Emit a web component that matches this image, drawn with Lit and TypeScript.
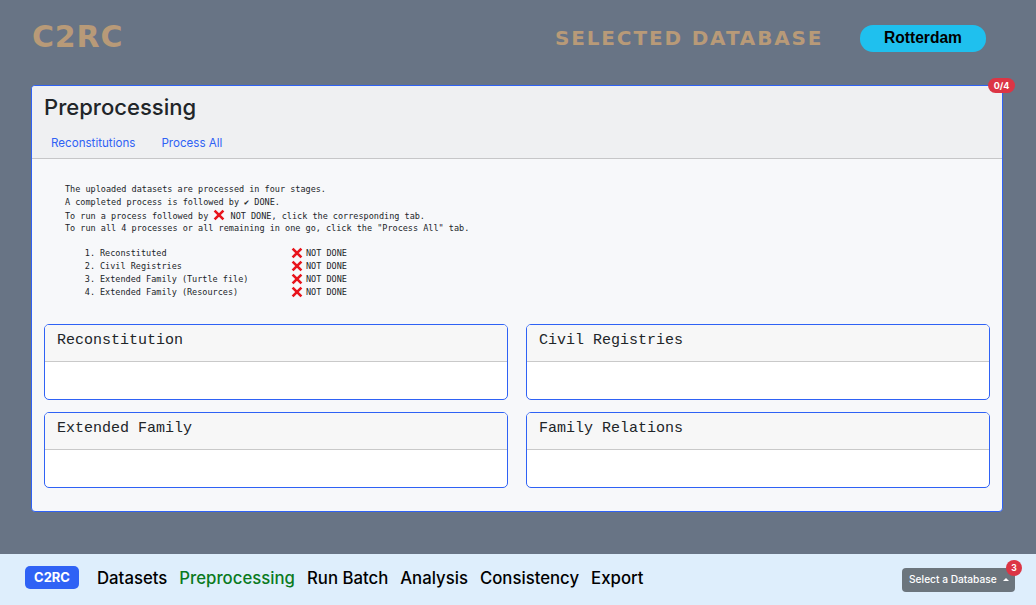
import { LitElement, html, css, svg } from "lit";
import { customElement } from "lit/decorators.js";

const cross = html`<svg class="x" viewBox="0 0 12 12">${svg`<path d="M1.6 1.6 L10.4 10.4 M10.4 1.6 L1.6 10.4" stroke="#e8141c" stroke-width="2.6" stroke-linecap="butt" fill="none"></path>`}</svg>`;

const stages = ["Reconstituted", "Civil Registries", "Extended Family (Turtle file)", "Extended Family (Resources)"];
const cards = ["Reconstitution", "Civil Registries", "Extended Family", "Family Relations"];
const links = ["Datasets", "Preprocessing", "Run Batch", "Analysis", "Consistency", "Export"];

@customElement("app-root")
export class AppRoot extends LitElement {
  static styles = css`
    :host {
      display: flex;
      flex-direction: column;
      height: 605px;
      background: #687485;
      font-family: Inter, "Liberation Sans", sans-serif;
      overflow: hidden;
    }

    .top {
      height: 85px;
      flex: none;
      display: flex;
      align-items: flex-start;
      padding: 0 50px 0 32px;
      box-sizing: border-box;
    }
    .logo,
    .selected {
      font-family: "DejaVu Sans", sans-serif;
      font-weight: 700;
      color: #b89a78;
    }
    .logo {
      font-size: 30px;
      line-height: 22px;
      margin-top: 26px;
      width: 523px;
      letter-spacing: 0.8px;
    }
    .selected {
      font-size: 20px;
      line-height: 16px;
      margin-top: 30px;
      width: 305px;
      letter-spacing: 1.85px;
      white-space: nowrap;
    }
    .db {
      margin-top: 25px;
      width: 126px;
      height: 27px;
      border-radius: 13px;
      background: #1fc0ee;
      color: #000;
      font: 700 15.6px/26px "Liberation Sans", sans-serif;
      text-align: center;
    }

    .panel {
      position: relative;
      margin: 0 33px 0 31px;
      height: 427px;
      box-sizing: border-box;
      flex: none;
      border: 1px solid #2f62f5;
      border-radius: 4px;
      background: #f7f8fa;
    }
    .count {
      position: absolute;
      top: -8px;
      right: -13px;
      width: 27px;
      height: 15px;
      border-radius: 8px;
      background: #dc3545;
      color: #fff;
      font-size: 9px;
      font-weight: 700;
      line-height: 15px;
      text-align: center;
    }
    .panel-head {
      height: 73px;
      box-sizing: border-box;
      background: #eff0f2;
      border-bottom: 1px solid #c6c6c8;
      border-radius: 3px 3px 0 0;
      padding: 6px 12px 0;
    }
    h1 {
      margin: 0;
      font-size: 22.05px;
      font-weight: 500;
      line-height: 30px;
      color: #212529;
    }
    .tabs {
      display: flex;
      gap: 26px;
      margin: 13px 0 0 7px;
      font-size: 11.6px;
      line-height: 16px;
      color: #2f62f5;
    }

    .text {
      margin: 24px 0 0 33px;
      font: 8.5px/12.9px "DejaVu Sans Mono", monospace;
      color: #212529;
    }
    .text p {
      margin: 0;
      height: 12.9px;
      white-space: pre;
    }
    .stages {
      margin: 12.8px 0 0;
      padding: 0;
      list-style: none;
    }
    .stages li {
      display: grid;
      grid-template-columns: 35px 191px 15px auto;
      height: 12.9px;
    }
    .stages .n {
      text-align: right;
      padding-right: 5px;
    }
    .x {
      width: 12px;
      height: 12px;
      vertical-align: -2.5px;
    }

    .grid {
      display: grid;
      grid-template-columns: 1fr 1fr;
      gap: 12.6px 18px;
      margin: 25px 12px 0;
    }
    .card {
      height: 75.7px;
      box-sizing: border-box;
      border: 1px solid #2f62f5;
      border-radius: 5px;
      background: #fff;
      overflow: hidden;
    }
    .card-head {
      height: 37px;
      box-sizing: border-box;
      background: #f7f7f7;
      border-bottom: 1px solid #c9c9c9;
      padding: 7px 12px 0;
      font: 15px/18px "Liberation Mono", monospace;
      color: #212529;
    }

    .bottom {
      margin-top: auto;
      height: 51px;
      flex: none;
      box-sizing: border-box;
      display: flex;
      align-items: center;
      padding: 0 21px 4px 25px;
      background: #deeefc;
    }
    .brand {
      width: 54px;
      height: 23px;
      border-radius: 5px;
      background: #2f62f5;
      color: #fff;
      font-size: 13px;
      font-weight: 700;
      line-height: 23px;
      text-align: center;
      margin-right: 18px;
    }
    nav {
      display: flex;
      gap: 12px;
      font-size: 16.75px;
      font-weight: 500;
      color: #000;
    }
    nav .on {
      color: #0a7a1e;
    }
    .select {
      position: relative;
      margin-left: auto;
      margin-top: 5px;
      width: 113px;
      height: 24px;
      box-sizing: border-box;
      padding: 0 0 2px 7px;
      display: flex;
      align-items: center;
      gap: 6px;
      border-radius: 4px;
      background: #6c757d;
      color: #fff;
      font-size: 10.2px;
      font-weight: 500;
    }
    .caret {
      width: 0;
      height: 0;
      border: 3px solid transparent;
      border-top: 0;
      border-bottom-color: #fff;
    }
    .num {
      position: absolute;
      top: -8px;
      right: -7px;
      width: 16px;
      height: 16px;
      border-radius: 50%;
      background: #dc3545;
      font-size: 8.5px;
      font-weight: 700;
      line-height: 16px;
      text-align: center;
    }
  `;

  render() {
    return html`
      <div class="top">
        <div class="logo">C2RC</div>
        <div class="selected">SELECTED DATABASE</div>
        <div class="db">Rotterdam</div>
      </div>

      <section class="panel">
        <span class="count">0/4</span>
        <header class="panel-head">
          <h1>Preprocessing</h1>
          <div class="tabs"><span>Reconstitutions</span><span>Process All</span></div>
        </header>

        <div class="text">
          <p>The uploaded datasets are processed in four stages.</p>
          <p>A completed process is followed by ✔ DONE.</p>
          <p>To run a process followed by ${cross} NOT DONE, click the corresponding tab.</p>
          <p>To run all 4 processes or all remaining in one go, click the "Process All" tab.</p>
          <ol class="stages">
            ${stages.map(
              (s, i) => html`<li><span class="n">${i + 1}.</span><span>${s}</span>${cross}<span>NOT DONE</span></li>`
            )}
          </ol>
        </div>

        <div class="grid">
          ${cards.map(
            (c) => html`<div class="card"><div class="card-head">${c}</div></div>`
          )}
        </div>
      </section>

      <footer class="bottom">
        <div class="brand">C2RC</div>
        <nav>
          ${links.map((l) => html`<span class=${l === "Preprocessing" ? "on" : ""}>${l}</span>`)}
        </nav>
        <div class="select">
          Select a Database <i class="caret"></i>
          <span class="num">3</span>
        </div>
      </footer>
    `;
  }
}
